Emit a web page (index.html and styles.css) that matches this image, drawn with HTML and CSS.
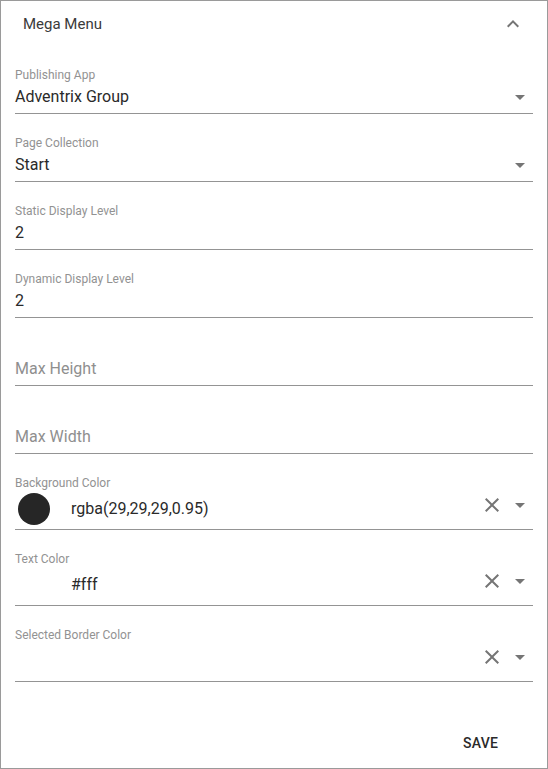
FILE: index.html
```html
<!DOCTYPE html>
<html>
<head>
<meta charset="utf-8">
<link rel="stylesheet" href="styles.css">
</head>
<body>
<div class="panel">
  <div class="header">
    <span class="title">Mega Menu</span>
    <span class="icon">
      <svg width="24" height="24" viewBox="0 0 24 24"><path d="M7.41 15.41L12 10.83l4.59 4.58L18 14l-6-6-6 6z" fill="#757575"/></svg>
    </span>
  </div>

  <div class="field">
    <div class="label">Publishing App</div>
    <div class="row">
      <span class="value">Adventrix Group</span>
      <span class="icon"><svg width="24" height="24" viewBox="0 0 24 24"><path d="M7 10l5 5 5-5z" fill="#757575"/></svg></span>
    </div>
  </div>

  <div class="field">
    <div class="label">Page Collection</div>
    <div class="row">
      <span class="value">Start</span>
      <span class="icon"><svg width="24" height="24" viewBox="0 0 24 24"><path d="M7 10l5 5 5-5z" fill="#757575"/></svg></span>
    </div>
  </div>

  <div class="field">
    <div class="label">Static Display Level</div>
    <div class="row"><span class="value">2</span></div>
  </div>

  <div class="field">
    <div class="label">Dynamic Display Level</div>
    <div class="row"><span class="value">2</span></div>
  </div>

  <div class="field">
    <div class="label"></div>
    <div class="row"><span class="value placeholder">Max Height</span></div>
  </div>

  <div class="field">
    <div class="label"></div>
    <div class="row"><span class="value placeholder">Max Width</span></div>
  </div>

  <div class="field color-field">
    <div class="label">Background Color</div>
    <div class="row">
      <span class="swatch swatch-dark"></span>
      <span class="value">rgba(29,29,29,0.95)</span>
      <span class="icon"><svg width="24" height="24" viewBox="0 0 24 24"><path d="M19 6.41L17.59 5 12 10.59 6.41 5 5 6.41 10.59 12 5 17.59 6.41 19 12 13.41 17.59 19 19 17.59 13.41 12z" fill="#757575"/></svg></span>
      <span class="icon"><svg width="24" height="24" viewBox="0 0 24 24"><path d="M7 10l5 5 5-5z" fill="#757575"/></svg></span>
    </div>
  </div>

  <div class="field color-field">
    <div class="label">Text Color</div>
    <div class="row">
      <span class="swatch swatch-white"></span>
      <span class="value">#fff</span>
      <span class="icon"><svg width="24" height="24" viewBox="0 0 24 24"><path d="M19 6.41L17.59 5 12 10.59 6.41 5 5 6.41 10.59 12 5 17.59 6.41 19 12 13.41 17.59 19 19 17.59 13.41 12z" fill="#757575"/></svg></span>
      <span class="icon"><svg width="24" height="24" viewBox="0 0 24 24"><path d="M7 10l5 5 5-5z" fill="#757575"/></svg></span>
    </div>
  </div>

  <div class="field color-field">
    <div class="label">Selected Border Color</div>
    <div class="row">
      <span class="value"></span>
      <span class="icon"><svg width="24" height="24" viewBox="0 0 24 24"><path d="M19 6.41L17.59 5 12 10.59 6.41 5 5 6.41 10.59 12 5 17.59 6.41 19 12 13.41 17.59 19 19 17.59 13.41 12z" fill="#757575"/></svg></span>
      <span class="icon"><svg width="24" height="24" viewBox="0 0 24 24"><path d="M7 10l5 5 5-5z" fill="#757575"/></svg></span>
    </div>
  </div>

  <div class="footer">
    <button class="save">SAVE</button>
  </div>
</div>
</body>
</html>
```

FILE: styles.css
```css
* { box-sizing: border-box; }
html, body { margin: 0; padding: 0; background: #fff; }
body { font-family: Roboto, "Noto Sans", sans-serif; color: #212121; }

.panel {
  width: 548px;
  height: 769px;
  border: 1px solid #9a9a9a;
  display: flex;
  flex-direction: column;
}

.header {
  height: 45px;
  padding: 0 22px;
  display: flex;
  align-items: center;
  justify-content: space-between;
}
.title { font-size: 15px; color: #3a3a3a; }

.icon {
  width: 24px;
  height: 24px;
  display: flex;
  align-items: center;
  justify-content: center;
  flex: none;
}
.icon + .icon { margin-left: 4px; }
.icon svg { display: block; }

.field {
  margin: 0 14px;
  padding-top: 20px;
  padding-bottom: 3px;
  border-bottom: 1px solid #949494;
}
.label {
  height: 18px;
  line-height: 18px;
  font-size: 12px;
  color: #929292;
}
.row {
  height: 26px;
  display: flex;
  align-items: center;
}
.value {
  flex: 1;
  font-size: 16px;
  line-height: 26px;
  color: #2a2a2a;
  white-space: nowrap;
}
.placeholder { color: #8f8f8f; }

.color-field .row { height: 34px; }
.color-field .row .icon { margin-bottom: 8px; }
.field .row .icon:last-child { margin-right: 1px; }

.swatch {
  width: 32px;
  height: 32px;
  border-radius: 50%;
  margin-left: 3px;
  margin-right: 21px;
  flex: none;
}
.swatch-dark { background: #262626; }
.swatch-white { background: #fff; }

.footer {
  margin-top: 43px;
  display: flex;
  justify-content: flex-end;
  padding-right: 33px;
}
.save {
  height: 36px;
  padding: 0 16px;
  border: none;
  background: transparent;
  font-family: Roboto, "Noto Sans", sans-serif;
  font-size: 14px;
  font-weight: 500;
  color: #2a2a2a;
  letter-spacing: 0.2px;
}
```
